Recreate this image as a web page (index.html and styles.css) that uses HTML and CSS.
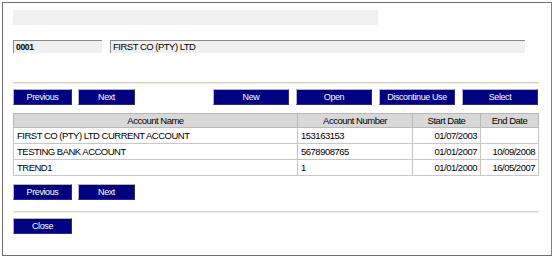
FILE: index.html
```html
<!DOCTYPE html>
<html>
<head>
<meta charset="utf-8">
<link rel="stylesheet" href="styles.css">
</head>
<body>
<div class="frame">
  <div class="titlebar"></div>
  <div class="fields">
    <div class="field code">0001</div>
    <div class="field name">FIRST CO (PTY) LTD</div>
  </div>
  <div class="rule"></div>
  <div class="btnrow">
    <div class="group">
      <button class="btn">Previous</button>
      <button class="btn next">Next</button>
    </div>
    <div class="group right">
      <button class="btn wide">New</button>
      <button class="btn wide">Open</button>
      <button class="btn wide">Discontinue Use</button>
      <button class="btn wide">Select</button>
    </div>
  </div>
  <table class="grid">
    <thead>
      <tr><th class="c1">Account Name</th><th class="c2">Account Number</th><th class="c3">Start Date</th><th class="c4">End Date</th></tr>
    </thead>
    <tbody>
      <tr><td>FIRST CO (PTY) LTD CURRENT ACCOUNT</td><td>153163153</td><td class="r">01/07/2003</td><td class="r"></td></tr>
      <tr><td>TESTING BANK ACCOUNT</td><td>5678908765</td><td class="r">01/01/2007</td><td class="r">10/09/2008</td></tr>
      <tr><td>TREND1</td><td>1</td><td class="r">01/01/2000</td><td class="r">16/05/2007</td></tr>
    </tbody>
  </table>
  <div class="btnrow bottom">
    <div class="group">
      <button class="btn">Previous</button>
      <button class="btn next">Next</button>
    </div>
  </div>
  <div class="rule rule2"></div>
  <div class="btnrow">
    <button class="btn">Close</button>
  </div>
</div>
</body>
</html>
```
FILE: styles.css
```css
* { box-sizing: border-box; }
html, body { margin: 0; padding: 0; background: #fff; }
body {
  width: 554px; height: 258px;
  font-family: "Liberation Sans", Arial, sans-serif;
  font-size: 9px;
  letter-spacing: -0.5px;
  color: #000;
}
.frame {
  margin: 2px 2px 0 2px;
  height: 254px;
  border: 1px solid #6e6e6e;
  border-right-color: #808080;
  padding: 7px 12px 0 10px;
  display: flex;
  flex-direction: column;
}
.titlebar {
  width: 365px;
  height: 15px;
  background: #f0f0f0;
}
.fields {
  display: flex;
  gap: 8px;
  margin-top: 15px;
}
.field {
  height: 13px;
  background: #f0f0f0;
  border-top: 1px solid #8a8a8a;
  border-left: 1px solid #8a8a8a;
  padding-left: 2px;
  line-height: 12px;
  font-size: 9.5px;
}
.code { width: 89px; font-weight: bold; font-size: 8.5px; letter-spacing: -0.3px; }
.name { width: 415px; }
.rule {
  height: 2px;
  margin-top: 29px;
  width: 526px;
  background: #d6d3c6;
  border-bottom: 1px solid #efeee8;
}
.btnrow {
  display: flex;
  justify-content: space-between;
  margin-top: 5px;
  width: 525px;
}
.group { display: flex; gap: 6px; }
.group.right { gap: 7px; }
.btn {
  margin: 0;
  width: 59px;
  height: 16px;
  background: #000080;
  color: #fff;
  font-family: "Liberation Sans", Arial, sans-serif;
  font-size: 9px;
  letter-spacing: -0.4px;
  border: 1px solid;
  border-color: #b0b0d8 #303060 #303060 #b0b0d8;
  padding: 0;
  line-height: 14px;
}
.btn.next { width: 57px; }
.btn.wide { width: 76px; }
.grid {
  margin-top: 8px;
  border-collapse: collapse;
  width: 525px;
  table-layout: fixed;
  font-size: 9px;
}
.grid th, .grid td {
  padding: 0 3px;
  border: 1px solid #c8c8c0;
  white-space: nowrap;
  overflow: hidden;
  text-align: left;
  font-weight: normal;
  line-height: 13px;
}
.grid td { height: 16px; font-size: 9.5px; }
.grid th {
  background: #d8d8d8;
  text-align: center;
  height: 14px;
  font-size: 9.5px;
  border-color: #b8b8b8;
}
.grid .c1 { width: 284px; }
.grid .c2 { width: 115px; }
.grid .c3 { width: 68px; }
.grid .c4 { width: 58px; }
.grid td.r { text-align: right; }
.btnrow.bottom { margin-top: 8px; }
.rule2 { margin-top: 11px; }
```
